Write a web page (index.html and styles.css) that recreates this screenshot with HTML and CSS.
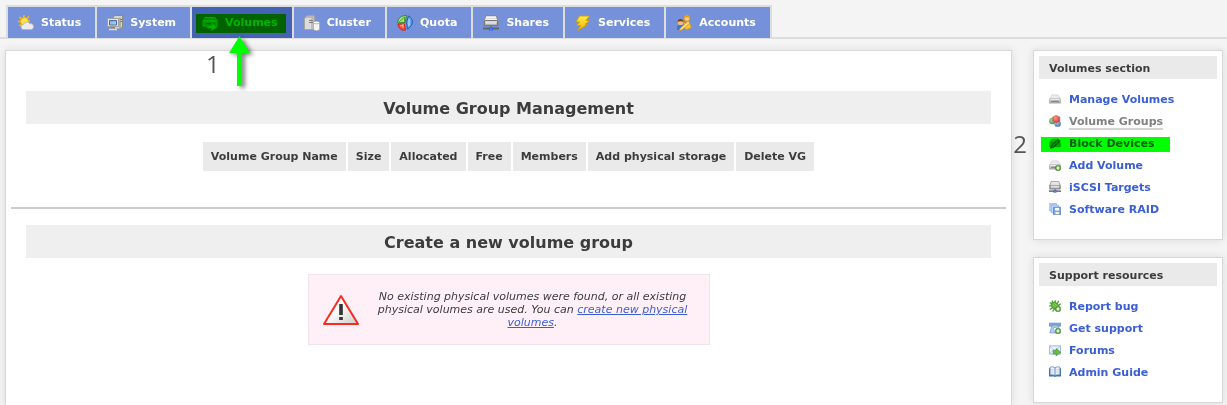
FILE: index.html
```html
<!DOCTYPE html>
<html lang="en">
<head>
<meta charset="utf-8">
<title>Volume Group Management</title>
<link rel="stylesheet" href="styles.css">
</head>
<body>
<svg class="defs" aria-hidden="true">
  <defs>
    <linearGradient id="metal" x1="0" y1="0" x2="0" y2="1"><stop offset="0" stop-color="#e4e4e4"/><stop offset="1" stop-color="#a4a4a4"/></linearGradient>
    <linearGradient id="screen" x1="0" y1="0" x2="1" y2="1"><stop offset="0" stop-color="#7fa9dc"/><stop offset="1" stop-color="#b8d4f4"/></linearGradient>
    <linearGradient id="sign" x1="0" y1="0" x2="1" y2="1"><stop offset=".4" stop-color="#fff"/><stop offset="1" stop-color="#ccc"/></linearGradient>
    <linearGradient id="gold" x1="0" y1="0" x2="0" y2="1"><stop offset="0" stop-color="#fff04a"/><stop offset="1" stop-color="#f0b400"/></linearGradient>
    <radialGradient id="red" cx=".4" cy=".35" r=".7"><stop offset="0" stop-color="#f59a92"/><stop offset="1" stop-color="#cf352e"/></radialGradient>
    <radialGradient id="green" cx=".4" cy=".35" r=".7"><stop offset="0" stop-color="#a3d694"/><stop offset="1" stop-color="#4b9040"/></radialGradient>
    <radialGradient id="blue" cx=".4" cy=".35" r=".7"><stop offset="0" stop-color="#a9c8f0"/><stop offset="1" stop-color="#4470b4"/></radialGradient>
    <symbol id="drive" viewBox="0 0 16 16"><path d="M4 2.500h8l3 5.500H1z" fill="#ececec" stroke="#c4c4c4" stroke-width=".8"/><path d="M.5 8h15v5.500H.5z" fill="url(#metal)" stroke="#a0a0a0" stroke-width=".8"/><path d="M2 8.700h12" stroke="#fafafa"/><path d="M3 11h10" stroke="#6c6c6c" stroke-width="1.200"/></symbol>
    <symbol id="netdrive" viewBox="0 0 16 16"><path d="M3 .5h10l2 5v5H1v-5z" fill="#ddd" stroke="#888"/><path d="M1.500 5.500h13v5h-13z" fill="url(#metal)" stroke="#777"/><path d="M3 2.500h10M2.500 4.500h11M3 8h10" stroke="#f4f4f4"/><path d="M0 13.500h16" stroke="#666" stroke-width="2"/><path d="M7 11h2v2H7z" fill="#777"/><path d="M6 12.500h4v3H6z" fill="#2d62e0"/><path d="M7.500 13.500h1v1h-1z" fill="#bcd2ff"/></symbol>
    <symbol id="plus" viewBox="0 0 16 16"><circle cx="12" cy="12" r="3.800" fill="#5fa03c" stroke="#447f26" stroke-width=".5"/><path d="M12 9.800v4.400M9.800 12h4.400" stroke="#fff" stroke-width="1.600"/></symbol>
    <symbol id="arrowbadge" viewBox="0 0 16 16"><path d="M5.500 8.500h4V6l6.300 5-6.300 4.800v-2.600h-4z" fill="#6cba48" stroke="#3f8a28" stroke-width=".8"/></symbol>
  </defs>
</svg>

<nav class="tabs" aria-label="Main">
  <a class="tab" href="#status">
    <svg class="icon" viewBox="0 0 16 16"><path d="M6 0v3M1.500 2l2 2M0 6.500h3M11 1.500l-2 2M12 6h-2M1.500 11l2-2" stroke="#f6b918" stroke-width="1.600"/><circle cx="6.500" cy="6.500" r="4" fill="#ffe14a" stroke="#f0a80c"/><path d="M5.500 14.500a2.500 2.500 0 0 1 0-5 3.700 3.700 0 0 1 6.500-.8 3 3 0 0 1 1.500 5.800z" fill="#ececec" stroke="#b4b4b4" stroke-width=".8"/></svg>
    <span>Status</span></a>
  <a class="tab" href="#system">
    <svg class="icon" viewBox="0 0 16 16"><path d="M6 2l2-1.500h7.500V12L13 14H7z" fill="#d5d5cd" stroke="#8b8b86"/><path d="M13 2.500v11" stroke="#8b8b86"/><path d="M13.500 4.500h1.500M13.500 6.500h1.500" stroke="#666"/><path d="M.5 3.500h11v8H.5z" fill="#e9e9e4" stroke="#9e9e9a"/><path d="M2.500 5.500h7v4.500h-7z" fill="url(#screen)" stroke="#426da3"/><path d="M4 12h4v2H4z" fill="#888"/><path d="M2 14.500h8" stroke="#ddd" stroke-width="1.500"/></svg>
    <span>System</span></a>
  <a class="tab tab-active" href="#volumes" aria-current="page">
    <svg class="icon" viewBox="0 0 16 16"><path d="M3 2.500h10l2 3v5.500H1V5.500z" fill="#8a8a8a" stroke="#b0b0b0"/><path d="M2 6h12" stroke="#c8c8c8"/><path d="M4 8.500h8" stroke="#666"/><path d="M5 10.500h4.500V8l6 4-6 3.500V13H5z" fill="#a8b8a0" stroke="#7a9470"/></svg>
    <span>Volumes</span></a>
  <a class="tab" href="#cluster">
    <svg class="icon" viewBox="0 0 16 16"><path d="M.5 3L3 .8h7.500v12L8 14.500H.5z" fill="#bdbdbd" stroke="#a4a4a4"/><path d="M1 3.200h6v10.800H1z" fill="#dcdcdc"/><path d="M5 5.500h4M5 7.500h4" stroke="#7c7c7c"/><path d="M9.500 7.500V14c0 2 6 2 6 0V7.500z" fill="#f4f4f4" stroke="#aaa" stroke-width=".7"/><ellipse cx="12.500" cy="7.500" rx="3" ry="1.300" fill="#fff" stroke="#999" stroke-width=".7"/></svg>
    <span>Cluster</span></a>
  <a class="tab" href="#quota">
    <svg class="icon" viewBox="0 0 16 16"><path d="M.8 8C.5 3 5 .3 9.500.5L8 7.500z" fill="#a5dc88" stroke="#2f8a25"/><path d="M2 7L7.500 2v5" fill="none" stroke="#4fa63a"/><path d="M1 9h6.500l1 6C4 16 1.500 13 1 9z" fill="#ef4a3a" stroke="#c82a1e"/><path d="M3 11l3-1v3" fill="none" stroke="#ffa79b" stroke-width="1.300"/><path d="M11.500 1c5 2 5.500 9.500-1 13L9.500 7.500z" fill="#65a2ea" stroke="#245cb0"/><path d="M12 4v7" stroke="#b5d6ff" stroke-width="1.300"/></svg>
    <span>Quota</span></a>
  <a class="tab" href="#shares">
    <svg class="icon"><use href="#netdrive"/></svg>
    <span>Shares</span></a>
  <a class="tab" href="#services">
    <svg class="icon" viewBox="0 0 16 16"><path d="M4.500 1h10L11 5.500h3.500L10 9.500h2.500L3 15.300l2.500-4.800H1.500L4.500 7H1z" fill="url(#gold)" stroke="#d79b00"/></svg>
    <span>Services</span></a>
  <a class="tab" href="#accounts">
    <svg class="icon" viewBox="0 0 16 16"><circle cx="11" cy="3.500" r="3" fill="#f9c58c" stroke="#c77d10" stroke-width=".7"/><path d="M8 3c0-4 6-4 6 0-2-1-4-1-6 0z" fill="#e9a500"/><path d="M7.500 7.500h6l2 5-3 1.500-3 1z" fill="#f5c63a" stroke="#c78a10" stroke-width=".8"/><circle cx="4.500" cy="7.500" r="2.700" fill="#f2bd87"/><path d="M1.500 7c0-4 6-4 6 0-2-1-4-1-6 0z" fill="#7b3f14"/><path d="M1 11.500l2-1.500h4l1 5H1z" fill="#3f74cc"/><path d="M4 13.500l8-7.500 2 2-8 7-3 .5z" fill="#ffdf70" stroke="#c98c1c" stroke-width=".7"/></svg>
    <span>Accounts</span></a>
</nav>

<div class="page">
  <main class="panel content">
    <h1 class="band">Volume Group Management</h1>
    <table class="groups">
      <thead>
        <tr><th>Volume Group Name</th><th>Size</th><th>Allocated</th><th>Free</th><th>Members</th><th>Add physical storage</th><th>Delete VG</th></tr>
      </thead>
    </table>
    <hr class="rule">
    <h2 class="band">Create a new volume group</h2>
    <div class="warning">
      <svg class="warning-icon" viewBox="0 0 36 31"><path d="M18 2L35 30H1z" fill="url(#sign)" stroke="#fb2a1d" stroke-width="2" stroke-linejoin="round"/><path d="M16.200 10h3.600v11h-3.600z" fill="#333"/><path d="M16.200 23h3.600v3h-3.600z" fill="#333"/></svg>
      <p class="warning-text">No existing physical volumes were found, or all existing physical volumes are used. You can <a href="#block-devices">create new physical volumes</a>.</p>
    </div>
  </main>

  <aside class="sidebar">
    <section class="panel box">
      <h3 class="box-title">Volumes section</h3>
      <ul class="links">
        <li><svg class="mini"><use href="#drive"/></svg><a href="#manage">Manage Volumes</a></li>
        <li><svg class="mini" viewBox="0 0 16 16"><circle cx="4.500" cy="8" r="4.300" fill="url(#green)"/><circle cx="11.500" cy="11.500" r="4.300" fill="url(#blue)"/><path d="M5 2.500L9.500.3 14.500 2.500v5.500L10 10.500 5 8z" fill="url(#red)" stroke="#d4534c" stroke-width=".6"/></svg><a class="current" href="#groups" aria-current="page">Volume Groups</a></li>
        <li><svg class="mini" viewBox="0 0 16 16"><path d="M4 3h8l3 5v5H1V8z" fill="#a8a8a8" stroke="#8c8c8c"/><path d="M2 15l1-4 9-8.500 3 3L6 14z" fill="#707070" stroke="#4c4c4c" stroke-width=".8"/><path d="M5 12l7-6.500" stroke="#b4b4b4"/></svg><a href="#block-devices">Block Devices</a></li>
        <li><svg class="mini" viewBox="0 0 16 16"><use href="#drive" width="16" height="16"/><use href="#plus" width="16" height="16"/></svg><a href="#add">Add Volume</a></li>
        <li><svg class="mini"><use href="#netdrive"/></svg><a href="#iscsi">iSCSI Targets</a></li>
        <li><svg class="mini" viewBox="0 0 16 16"><path d="M1 .8h9v10H1z" fill="#bcd4f6" stroke="#86acE4"/><path d="M3.500 3h9v10h-9z" fill="#d4e3fa" stroke="#86ace4"/><path d="M6 5.500h9.500v10H6z" fill="#7ba4e8" stroke="#4c7acc"/><path d="M8 6.500h5.500v3.500H8z" fill="#fff"/><path d="M8.500 12h5v3h-5z" fill="#eef0d0"/></svg><a href="#raid">Software RAID</a></li>
      </ul>
    </section>
    <section class="panel box">
      <h3 class="box-title">Support resources</h3>
      <ul class="links">
        <li><svg class="mini" viewBox="0 0 16 16"><path d="M4 5L1 3.500M5 4L4 .5M8 3.500L8.500.3M11 5l2-4M3 8H0M4 11l-3 1.500M6 13l-1 2.500M13 7l2.500-2" stroke="#4b9a35" stroke-width="1.600"/><ellipse cx="8" cy="8" rx="4.600" ry="6" transform="rotate(-45 8 8)" fill="#5fb340" stroke="#3c8a28" stroke-width=".8"/><path d="M5 6l6 5M7 4.500l5 4" stroke="#a3dc83"/><use href="#plus" width="16" height="16"/></svg><a href="#bug">Report bug</a></li>
        <li><svg class="mini" viewBox="0 0 16 16"><path d="M.5 1.500h15v4h-4v-1.500h-7v1.500h-4z" fill="#7ea7dc" stroke="#6189be"/><path d="M4 5h8l3 9.500H1z" fill="#b4cdec" stroke="#7399ca"/><circle cx="8" cy="9.500" r="2.500" fill="#fff" stroke="#7da1d2"/><use href="#plus" width="16" height="16"/></svg><a href="#support">Get support</a></li>
        <li><svg class="mini" viewBox="0 0 16 16"><path d="M.5 2.500h15v11H.5z" fill="#edf4ff" stroke="#7ba0d4"/><path d="M1 3l7 6 7-6M1 13l5-5.500" fill="none" stroke="#9ab8e0"/><use href="#arrowbadge" width="16" height="16"/></svg><a href="#forums">Forums</a></li>
        <li><svg class="mini" viewBox="0 0 16 16"><path d="M0 3h16v11H9l-1 1-1-1H0z" fill="#3d6fae"/><path d="M1.500 1.500c3-.7 5-.3 6.500 1 1.500-1.300 3.500-1.700 6.500-1V12c-3-.6-5-.2-6.500 1-1.500-1.200-3.500-1.600-6.500-1z" fill="#f3f7fd" stroke="#5a84b8"/><path d="M8 2.500V13" stroke="#2f639f"/><path d="M3 4.500h3M3 6.500h3M3 8.500h3M10 4.500h3M10 6.500h3M10 8.500h3" stroke="#b4cae4"/></svg><a href="#guide">Admin Guide</a></li>
      </ul>
    </section>
  </aside>
</div>

<div class="marker marker-tab"></div>
<div class="marker marker-link"></div>
<svg class="pointer" viewBox="0 0 30 60"><path d="M14.500 4L25 21h-8v33h-5V21H4z" fill="#0f0"/></svg>
<span class="step step-one">1</span>
<span class="step step-two">2</span>
</body>
</html>
```
FILE: styles.css
```css
* { box-sizing: border-box; }

body {
  margin: 0;
  min-height: 100vh;
  display: flex;
  flex-direction: column;
  position: relative;
  background: #f4f4f4;
  color: #3c3c3c;
  font: 11px/13px Verdana, "DejaVu Sans", sans-serif;
}

.defs { position: absolute; width: 0; height: 0; }

a { color: #3a5fd4; }

.tabs {
  display: flex;
  gap: 2px;
  padding: 5px 6px 0;
  background: linear-gradient(#ddd, #ddd) 0 100% / 100% 2px no-repeat;
}

.tab {
  display: flex;
  align-items: center;
  gap: 7px;
  height: 34px;
  padding: 0 14px 0 10px;
  border-top: 2px solid #ddd;
  border-bottom: 1px solid #ddd;
  background: #7591d9;
  box-shadow: 2px 0 #ddd, -2px 0 #ddd;
  color: #fff;
  font-weight: bold;
  text-decoration: none;
}
.tab:first-child { margin-left: 2px; }
.tab-active { background: #4563b4; color: #a9b4dd; }

.icon { width: 16px; height: 16px; flex: none; }

.page {
  flex: 1;
  display: grid;
  grid-template-columns: 1fr 190px;
  gap: 21px;
  padding: 11px 4px 0 5px;
}

.panel {
  background: #fff;
  border: 1px solid #d8d8d8;
  box-shadow: 0 0 8px rgba(0, 0, 0, .1);
}

.content { padding: 40px 5px 0; border-bottom: 0; }

.band {
  margin: 0 15px;
  padding: 7px 0 5px;
  background: #efefef;
  font-size: 16px;
  line-height: 21px;
  text-align: center;
}

.groups {
  margin: 16px auto 34px;
  border-spacing: 2px;
}
.groups th { padding: 8px; background: #eaeaea; }

.rule { height: 2px; margin: 0 0 16px; border: 0; background: #ccc; }

.warning {
  display: flex;
  align-items: center;
  gap: 12px;
  width: 402px;
  margin: 16px auto 0;
  padding: 15px 14px;
  border: 1px solid #f2e2ea;
  background: #fff0f7;
}
.warning-icon { width: 36px; height: 31px; flex: none; }
.warning-text { flex: 1; margin: 0; font-style: italic; text-align: center; }

.sidebar { display: flex; flex-direction: column; gap: 17px; padding-bottom: 2px; }

.box { padding: 5px 5px 19px; }
.box-title { margin: 0 0 9px; padding: 6px 10px 4px; background: #eaeaea; font-size: 11px; }

.links { margin: 0; padding: 0 10px; list-style: none; font-weight: bold; }
.links li { display: flex; align-items: center; gap: 8px; height: 22px; }
.links a { text-decoration: none; }
.links .current { color: #808080; box-shadow: 0 2px #d4d4d4; }
.mini { width: 12px; height: 12px; flex: none; }

.marker { position: absolute; background: #0f0; mix-blend-mode: multiply; }
.marker-tab { left: 196px; top: 14px; width: 90px; height: 19px; }
.marker-link { right: 57px; top: 137px; width: 129px; height: 15px; }

.pointer {
  position: absolute;
  left: 225px;
  top: 32px;
  width: 30px;
  height: 60px;
  filter: drop-shadow(3px 2px 2px rgba(0, 0, 0, .5));
}

.step { position: absolute; color: #555; font: 24px/28px "Open Sans", sans-serif; }
.step-one { left: 206px; top: 50px; }
.step-two { right: 200px; top: 130px; }
```
